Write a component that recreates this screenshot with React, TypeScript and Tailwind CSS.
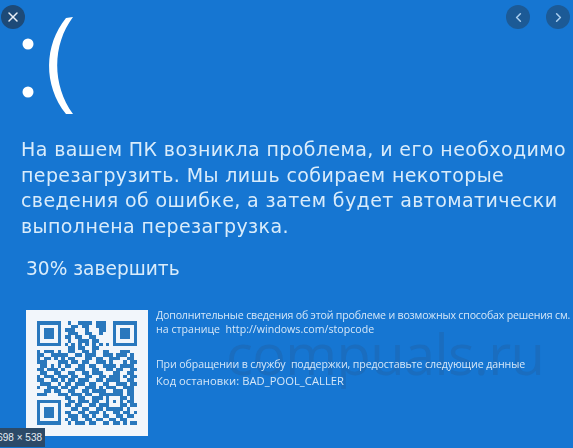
import { ChevronLeft, ChevronRight, X } from "lucide-react";

const qrRows = [
  "11111110010011110111001111111",
  "10000010001101100111001000001",
  "10111010111000100011001011101",
  "10111010011100110010001011101",
  "10111010110110011000001011101",
  "10000010010011101100001000001",
  "11111110101010101010101111111",
  "00000000011011001100000000000",
  "10111010011001101001100011100",
  "11001111100110111001110111010",
  "10110101011000110110011100110",
  "11100011101101100111010001011",
  "01101010110011011001111011110",
  "11011101000111001100110110011",
  "01100110011001101110001100110",
  "10111011101100110011011101011",
  "11001101011011100110111100110",
  "01110010110111011001100111011",
  "10011101101100111010111001110",
  "00110110011001101111001110110",
  "11100011101110110011111110110",
  "00000000110011001110100011010",
  "11111110011011101100101010110",
  "10000010110110011011100011011",
  "10111010001101100110111110100",
  "10111010110011011101001101101",
  "10111010011101101001100110110",
  "10000010101100110110011011000",
  "11111110010111011001101101011",
];

function QrCode() {
  return (
    <div className="grid h-[104px] w-[100px] grid-cols-[repeat(29,1fr)] grid-rows-[repeat(29,1fr)] blur-[0.4px]">
      {qrRows.flatMap((row, y) =>
        row.split("").map((cell, x) => (
          <div key={`${x}-${y}`} className={cell === "1" ? "bg-[#2a78bd]" : ""} />
        )),
      )}
    </div>
  );
}

function NavButton({ children }: { children: React.ReactNode }) {
  return (
    <button className="flex h-6 w-6 items-center justify-center rounded-full bg-[#1c5a96] text-[#a9cdee]">
      {children}
    </button>
  );
}

export default function App() {
  return (
    <div className="relative h-[448px] w-[573px] overflow-hidden bg-[#1676d2] font-['Liberation_Sans',sans-serif] text-[#d9ecfb]">
      {/* watermark sits under the text */}
      <div className="pointer-events-none absolute top-[323px] left-[226px] font-['Open_Sans',sans-serif] text-[56px] leading-[60px] tracking-[-0.6px] whitespace-nowrap text-[#1a6dbf]">
        compuals.ru
      </div>

      <button className="absolute top-[5px] left-[1px] z-10 flex h-6 w-6 items-center justify-center rounded-full bg-[#1d4a78] text-[#e8eef5]">
        <X size={16} strokeWidth={2.25} />
      </button>
      <div className="absolute top-[5px] right-[3px] z-10 flex gap-4">
        <NavButton>
          <ChevronLeft size={15} strokeWidth={2.5} />
        </NavButton>
        <NavButton>
          <ChevronRight size={15} strokeWidth={2.5} />
        </NavButton>
      </div>

      <div className="relative flex h-full flex-col">
        <div className="flex h-[137px] shrink-0 pt-[17px] pl-[22px]">
          <svg width="54" height="100" viewBox="0 0 54 100" className="text-white">
            <circle cx="6" cy="27" r="5.5" fill="currentColor" />
            <circle cx="6" cy="75" r="5.5" fill="currentColor" />
            <path d="M51 0 L44 1 C22 28 21 68 44 97 L51 97 C30 68 30 28 51 0 Z" fill="currentColor" />
          </svg>
        </div>

        <p className="ml-[21px] font-['DejaVu_Sans',sans-serif] text-[19px] leading-[25.5px] tracking-[0.4px] whitespace-nowrap blur-[0.3px]">
          На вашем ПК возникла проблема, и его необходимо
          <br />
          перезагрузить. Мы лишь собираем некоторые
          <br />
          сведения об ошибке, а затем будет автоматически
          <br />
          выполнена перезагрузка.
        </p>

        <p className="mt-[18px] ml-[26px] font-['DejaVu_Sans',sans-serif] text-[18.6px] leading-6 blur-[0.3px]">
          30% завершить
        </p>

        <div className="mt-[29px] flex items-start">
          <div className="ml-[26px] flex h-[126px] w-[122px] shrink-0 items-center justify-center bg-[#f2f6fb]">
            <QrCode />
          </div>
          <div className="mt-[-2px] ml-[8px] font-['Open_Sans',sans-serif] text-[10.6px] leading-[14px] tracking-[-0.18px] whitespace-nowrap text-[#d5e7f8] blur-[0.25px]">
            <p>Дополнительные сведения об этой проблеме и возможных способах решения см.</p>
            <p className="tracking-[0.02px]">на странице&nbsp; http://windows.com/stopcode</p>
            <p className="mt-[21px] tracking-[-0.1px]">При обращении в службу&nbsp; поддержки, предоставьте следующие данные</p>
            <p className="mt-[3px] text-[11.2px] tracking-[0.05px]">Код остановки: BAD_POOL_CALLER</p>
          </div>
        </div>
      </div>

      <div className="absolute bottom-[1px] left-0 z-10 flex h-[19px] w-[45px] items-center justify-end overflow-hidden bg-[#2c4a68] pr-[3px] font-['Liberation_Sans',sans-serif] text-[10px] whitespace-nowrap text-[#e6edf4]">
        698 × 538
      </div>
    </div>
  );
}
